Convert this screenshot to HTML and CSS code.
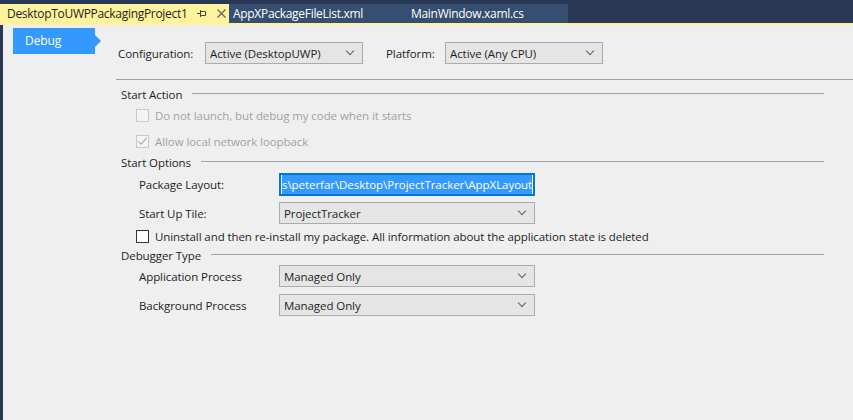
FILE: index.html
```html
<!DOCTYPE html>
<html>
<head>
<meta charset="utf-8">
<link rel="stylesheet" href="styles.css">
</head>
<body>
<div class="tabstrip">
  <div class="tab active">
    <span class="tab-title">DesktopToUWPPackagingProject1</span>
    <svg class="pin" width="9" height="7" viewBox="0 0 9 7"><path d="M0 3.5H3M3.5 0V7M3.5 1.5H8.5V5.5H3.5" fill="none" stroke="#4a4a3a" stroke-width="1"/></svg>
    <svg class="close" width="9" height="9" viewBox="0 0 9 9"><path d="M0.5 0.5L8.5 8.5M8.5 0.5L0.5 8.5" stroke="#6a6a5a" stroke-width="1.3"/></svg>
  </div>
  <div class="tab inactive first">AppXPackageFileList.xml</div>
  <div class="tab inactive second">MainWindow.xaml.cs</div>
</div>
<div class="accent"></div>
<div class="main">
  <div class="sidebar">
    <div class="navbtn">Debug</div>
  </div>
  <div class="content">
    <div class="toprow">
      <span class="lbl cfg">Configuration:</span>
      <div class="select w158"><span>Active (DesktopUWP)</span><i class="chev"></i></div>
      <span class="lbl plat">Platform:</span>
      <div class="select w158"><span>Active (Any CPU)</span><i class="chev"></i></div>
    </div>
    <div class="rule"></div>
    <div class="group g1"><span class="gtitle">Start Action</span><span class="gline"></span></div>
    <div class="cbrow r1 disabled"><span class="cb"></span><span>Do not launch, but debug my code when it starts</span></div>
    <div class="cbrow r2 disabled"><span class="cb"><svg width="11" height="11" viewBox="0 0 11 11"><path d="M1.5 5.5L4.2 8.2L9.5 2" fill="none" stroke="#b0b0b0" stroke-width="1.2"/></svg></span><span>Allow local network loopback</span></div>
    <div class="group g2"><span class="gtitle">Start Options</span><span class="gline"></span></div>
    <div class="frow pk"><span class="flbl">Package Layout:</span><div class="textbox"><span class="sel">s\peterfar\Desktop\ProjectTracker\AppXLayout</span><span class="caret"></span></div></div>
    <div class="frow tile"><span class="flbl">Start Up Tile:</span><div class="select w256"><span>ProjectTracker</span><i class="chev"></i></div></div>
    <div class="cbrow r3"><span class="cb dark"></span><span>Uninstall and then re-install my package. All information about the application state is deleted</span></div>
    <div class="group g3"><span class="gtitle">Debugger Type</span><span class="gline"></span></div>
    <div class="frow app"><span class="flbl">Application Process</span><div class="select w256"><span>Managed Only</span><i class="chev"></i></div></div>
    <div class="frow bgp"><span class="flbl">Background Process</span><div class="select w256"><span>Managed Only</span><i class="chev"></i></div></div>
  </div>
</div>
</body>
</html>
```
FILE: styles.css
```css
* { box-sizing: border-box; }
html, body { margin: 0; padding: 0; }
body {
  background: #293955;
  width: 853px;
  height: 420px;
  overflow: hidden;
  font-family: "Segoe UI", "Open Sans", "Noto Sans", sans-serif;
  font-size: 11.5px;
  letter-spacing: -0.08px;
  color: #1e1e1e;
}
.tabstrip {
  height: 23px;
  padding-top: 4px;
  display: flex;
  align-items: stretch;
}
.tab {
  display: flex;
  align-items: center;
  height: 19px;
  white-space: nowrap;
  font-size: 12px;
  letter-spacing: -0.3px;
}
.tab.active {
  background: #fff29d;
  width: 229px;
  padding-left: 7px;
  color: #1e1e1e;
}
.tab-title { width: 190px; }
.close { margin-left: 11px; }
.tab.inactive {
  background: #364e6f;
  color: #ffffff;
}
.tab.first { width: 178px; padding-left: 4px; }
.tab.second { width: 161px; padding-left: 4px; }
.accent { height: 2px; background: #fff29d; }
.main {
  margin-left: 3px;
  background: #efefef;
  height: 395px;
  display: flex;
}
.sidebar { width: 113px; padding-top: 3px; }
.navbtn {
  position: relative;
  margin-left: 10px;
  width: 82px;
  height: 26px;
  background: #3399ff;
  color: #fff;
  padding-left: 12px;
  line-height: 25px;
  font-size: 12px;
}
.navbtn::after {
  content: "";
  position: absolute;
  right: -6px;
  top: 7px;
  border-left: 6px solid #3399ff;
  border-top: 6px solid transparent;
  border-bottom: 6px solid transparent;
}
.content { flex: 1; display: flex; flex-direction: column; }
.toprow {
  margin-top: 17px;
  height: 22px;
  display: flex;
  align-items: center;
  padding-left: 2px;
}
.lbl.cfg { width: 87px; }
.lbl.plat { margin-left: 23px; width: 59px; }
.select {
  height: 22px;
  border: 1px solid #acacac;
  background: #e5e5e5;
  display: flex;
  align-items: center;
  justify-content: space-between;
  padding-left: 4px;
  padding-right: 9px;
  white-space: nowrap;
}
.w158 { width: 158px; }
.w256 { width: 256px; }
.chev {
  width: 6px;
  height: 6px;
  border-right: 1px solid #606060;
  border-bottom: 1px solid #606060;
  transform: rotate(45deg);
  margin-top: -4px;
}
.rule { margin-top: 15px; height: 1px; background: #a0a0a0; }
.group {
  height: 16px;
  display: flex;
  align-items: center;
  padding-left: 5px;
  width: 708px;
}
.gtitle { white-space: nowrap; }
.gline { flex: 1; height: 1px; background: #a0a0a0; margin-left: 10px; margin-top: -1px; }
.g1 { margin-top: 6px; }
.g2 { margin-top: 3px; }
.g3 { margin-top: 1px; }
.cbrow {
  height: 20px;
  display: flex;
  align-items: center;
  padding-left: 20px;
  white-space: nowrap;
}
.cb {
  width: 13px;
  height: 13px;
  border: 1px solid #c8c8c8;
  background: #f4f4f4;
  margin-right: 6px;
  display: flex;
  align-items: center;
  justify-content: center;
}
.cb.dark { border-color: #333; background: #fff; }
.disabled { color: #a2a2a2; }
.r1 { margin-top: 3px; }
.r2 { margin-top: 6px; }
.r3 { margin-top: 2px; }
.frow {
  display: flex;
  align-items: center;
  padding-left: 23px;
}
.flbl { width: 140px; white-space: nowrap; }
.pk { margin-top: 3px; height: 23px; }
.tile { margin-top: 6px; height: 22px; }
.app { margin-top: 2px; height: 22px; }
.bgp { margin-top: 7px; height: 22px; }
.textbox {
  width: 256px;
  height: 23px;
  border: 2px solid #0078d7;
  background: #fff;
  padding: 0 1px;
  display: flex;
  align-items: stretch;
}
.sel {
  background: #3399ff;
  color: #fff;
  white-space: nowrap;
  line-height: 19px;
  flex: 1;
  letter-spacing: -0.05px;
}
.caret { width: 1px; background: #d08030; }
```
